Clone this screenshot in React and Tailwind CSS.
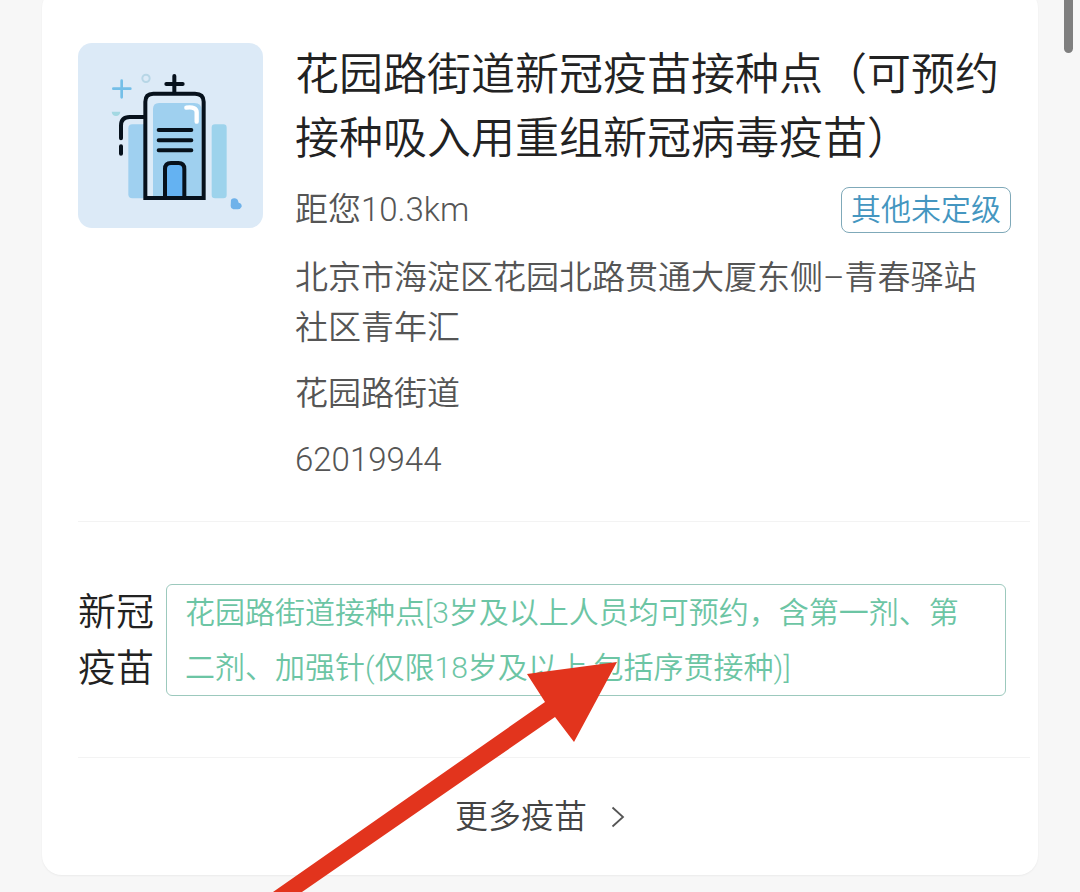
import { clsx } from "clsx";

const site = {
  name: "花园路街道新冠疫苗接种点（可预约接种吸入用重组新冠病毒疫苗）",
  distance: "距您10.3km",
  level: "其他未定级",
  details: [
    "北京市海淀区花园北路贯通大厦东侧–青春驿站社区青年汇",
    "花园路街道",
    "62019944",
  ],
  vaccine: "新冠疫苗",
  plan: "花园路街道接种点[3岁及以上人员均可预约，含第一剂、第二剂、加强针(仅限18岁及以上,包括序贯接种)]",
};

function HospitalIcon() {
  return (
    <svg
      viewBox="25 24 555 555"
      className="w-[185px] h-[185px] flex-shrink-0 rounded-[14px] bg-[#dceaf7]"
      fill="none"
      strokeLinecap="round"
      strokeLinejoin="round"
      aria-hidden="true"
    >
      <rect x="176" y="268" width="60" height="222" rx="12" fill="#9fd0f0" />
      <rect x="426" y="268" width="45" height="222" rx="10" fill="#9dd3ec" />
      <path d="M228 492V200q0-24 24-24h125q26 0 26 24v292z" fill="#dcebf8" />
      <path d="M250 488V222q0-18 18-18h106q22 0 22 22v262z" fill="#9fd0ef" />
      <path d="M350 218q31-4 31 14v28" stroke="#fff" strokeWidth="13" />
      <path d="M286 489V402q0-18 18-18h22q18 0 18 18v87z" fill="#64b2f2" />
      <g stroke="#06111c" strokeWidth="12">
        <path
          d="M227 489V200q0-24 24-24h125q26 0 26 24v289z"
          strokeLinejoin="miter"
        />
        <path d="M286 489V402q0-18 18-18h22q18 0 18 18v87" />
        <path d="M314 123v50M290 147h49" />
        <path d="M267 285h98M267 316h98M267 346h98" />
        <path d="M222 246h-42q-26 0-26 26v38M154 334v22" />
      </g>
      <path d="M156 137v50M131 161h51" stroke="#74bfe8" strokeWidth="8" />
      <circle cx="229" cy="130" r="11" stroke="#b7d6e6" strokeWidth="6" />
      <path d="M126 230h26q-2 13-13 13t-13-13z" fill="#a3d8e2" />
      <path
        d="M484 494q10-8 20 0l3 9q10 2 9 12-4 8-12 8h-13q-8-2-8-10z"
        fill="#6fb2ea"
      />
    </svg>
  );
}

function ChevronIcon() {
  return (
    <svg
      viewBox="0 0 14 22"
      className="w-3.5 h-[22px]"
      fill="none"
      stroke="#555"
      strokeWidth="1.8"
      aria-hidden="true"
    >
      <path d="M1.5 1.5L12 11L1.5 20.5" />
    </svg>
  );
}

function Divider() {
  return <div className="h-px mr-2 bg-[#f3f3f3]" />;
}

function ArrowMark() {
  return (
    <svg
      viewBox="0 0 344 231"
      className="absolute left-[273px] top-[661px] w-[344px] h-[231px] pointer-events-none"
      aria-hidden="true"
    >
      <path
        d="M344 1L254 13L272 41L0 231H29L282 56L301 81Z"
        fill="#e2341d"
      />
    </svg>
  );
}

export default function App() {
  return (
    <div
      lang="zh-CN"
      className="relative min-h-screen overflow-hidden bg-[#f7f7f7] px-[42px] pb-[17px] font-['Roboto','Noto_Sans_CJK_SC',sans-serif]"
    >
      <main className="-mt-3 bg-white rounded-[20px] pl-9 shadow-xs">
        <section className="flex gap-8 pt-[55px] pr-[27px] pb-9">
          <HospitalIcon />
          <div className="flex-1 min-w-0 text-[33px] leading-[50px] text-[#555] font-[350]">
            <h1 className="text-[44px] leading-[64px] text-[#222] font-[350]">
              {site.name}
            </h1>
            <div className="flex items-center justify-between mt-4 mb-5 h-[46px]">
              <p>{site.distance}</p>
              <span className="h-full px-[9px] text-[30px] leading-[44px] text-[#4496c0] border border-[#7fa9b9] rounded-lg">
                {site.level}
              </span>
            </div>
            {site.details.map((line, i) => (
              <p key={line} className={clsx("pr-2", i > 0 && "mt-4")}>
                {line}
              </p>
            ))}
          </div>
        </section>
        <Divider />
        <section className="flex gap-3 pt-[62px] pr-8 pb-[61px]">
          <h2 className="w-[76px] flex-shrink-0 text-[38px] leading-[56px] text-[#222] font-[350]">
            {site.vaccine}
          </h2>
          <button className="flex-1 px-[18px] text-left text-[30px] leading-[55px] text-[#6cc5a4] font-[350] border border-[#9cc9bd] rounded-md">
            {site.plan}
          </button>
        </section>
        <Divider />
        <button className="flex items-center justify-center gap-6 w-full h-[117px] pr-9 text-[33px] text-[#444] font-[350]">
          更多疫苗
          <ChevronIcon />
        </button>
      </main>
      <ArrowMark />
      <div className="absolute right-[7px] top-0 w-[9px] h-[53px] rounded-b-full bg-[#7f7f7f]" />
    </div>
  );
}
